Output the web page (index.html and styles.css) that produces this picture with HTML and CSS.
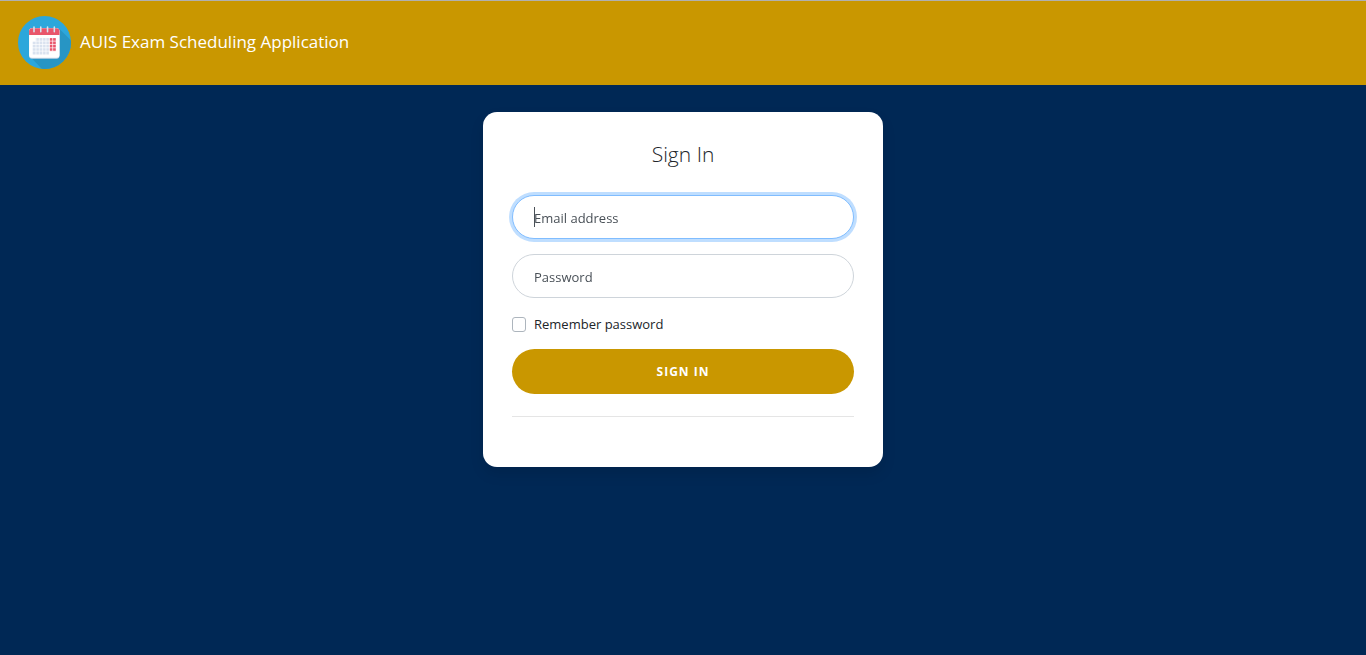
FILE: index.html
```html
<!DOCTYPE html>
<html lang="en">
<head>
<meta charset="utf-8">
<meta name="viewport" content="width=device-width, initial-scale=1">
<title>AUIS Exam Scheduling Application</title>
<link rel="stylesheet" href="styles.css">
</head>
<body>
<header class="navbar">
  <a class="brand" href="#">
    <svg class="brand-logo" viewBox="0 0 54 54" aria-hidden="true">
      <defs><clipPath id="disc"><circle cx="27" cy="27" r="27"/></clipPath></defs>
      <circle cx="27" cy="27" r="27" fill="#2ca7db"/>
      <path d="M42 13 L62 33 V62 H32 L13 42 Z" fill="#2795c4" clip-path="url(#disc)"/>
      <rect x="11.300" y="12.500" width="31" height="31" rx="3" fill="#c9d5e3"/>
      <rect x="11.300" y="12.500" width="31" height="30" rx="3" fill="#fff"/>
      <path d="M11.300 19.300 V15.500 a3 3 0 0 1 3-3 H39.300 a3 3 0 0 1 3 3 V19.300 Z" fill="#e9566b"/>
      <path d="M16.300 11.300 V16 M23.200 11.300 V16 M30.100 11.300 V16 M37 11.300 V16" stroke="#d5e3ee" stroke-width="1.600" stroke-linecap="round"/>
      <path d="M18 22.500h13.700v16.700H15V26h3z" fill="#d9e2ef"/>
      <path d="M32.200 22.500h6.300v13.300h-6.300z" fill="#e9566b"/>
      <path d="M18.300 22v18M21.700 22v18M25.100 22v18M28.500 22v18M31.900 22v18M35.300 22v14M14 25.600h25M14 29h25M14 32.400h25M14 35.800h25" stroke="#fff" stroke-width=".7"/>
    </svg>
    <span class="brand-name">AUIS Exam Scheduling Application</span>
  </a>
</header>
<main class="page">
  <section class="card">
    <h1 class="card-title">Sign In</h1>
    <form class="form-signin">
      <div class="field">
        <input class="field-input" type="email" id="email" autofocus required>
        <label class="field-label" for="email">Email address</label>
      </div>
      <div class="field">
        <input class="field-input" type="password" id="password" required>
        <label class="field-label" for="password">Password</label>
      </div>
      <div class="check">
        <input class="check-input" type="checkbox" id="remember">
        <label for="remember">Remember password</label>
      </div>
      <button class="btn" type="submit">Sign in</button>
      <hr class="divider">
    </form>
  </section>
</main>
</body>
</html>
```
FILE: styles.css
```css
*, *::before, *::after { box-sizing: border-box; }

body {
  margin: 0;
  min-height: 100vh;
  background: #002855;
  color: #212529;
  font-family: "Segoe UI", "Open Sans", "Noto Sans", sans-serif;
  font-size: 13px;
  line-height: 22px;
}

.navbar {
  display: flex;
  align-items: center;
  padding: 15px 18px 16px;
  border-top: 1px solid #b0b0b0;
  background: #c99700;
}

.brand {
  display: flex;
  align-items: center;
  gap: 9px;
  color: #fff;
  font-size: 17px;
  text-decoration: none;
}

.brand-logo {
  flex: none;
  width: 53px;
  height: 53px;
}

.brand-name {
  padding-bottom: 2px;
}

.page {
  display: flex;
  justify-content: center;
  padding: 27px 16px;
}

.card {
  width: 100%;
  max-width: 400px;
  padding: 29px 29px 28px;
  border-radius: 14px;
  background: #fff;
  box-shadow: 0 7px 14px rgba(0, 0, 0, .1);
}

.card-title {
  margin: 0 0 28px;
  font-size: 21px;
  font-weight: 300;
  line-height: 26px;
  text-align: center;
}

.field {
  position: relative;
  margin-bottom: 15px;
}

.field-input {
  display: block;
  width: 100%;
  height: 44px;
  padding: 10px 21px;
  border: 1px solid #ced4da;
  border-radius: 22px;
  outline: none;
  background: #fff;
  color: #495057;
  caret-color: transparent;
  font: inherit;
}

.field-input:focus {
  border-color: #80bdff;
  box-shadow: 0 0 0 3px rgba(0, 123, 255, .25);
}

.field-label {
  position: absolute;
  inset: 0;
  padding: 12px 22px;
  color: #495057;
  pointer-events: none;
}

/* text cursor of the focused field */
.field-input:focus + .field-label::before {
  content: "";
  position: absolute;
  top: 12px;
  left: 22px;
  width: 1px;
  height: 20px;
  background: #495057;
}

.check {
  display: flex;
  align-items: center;
  gap: 8px;
  margin-bottom: 14px;
}

.check-input {
  appearance: none;
  width: 14px;
  height: 15px;
  margin: 0;
  border: 1px solid #adb5bd;
  border-radius: 3px;
  background: #fff;
}

.check-input:checked {
  border-color: #007bff;
  background: #007bff;
}

.btn {
  display: block;
  width: 100%;
  padding: 14px;
  border: 0;
  border-radius: 23px;
  background: #c99700;
  color: #fff;
  font: inherit;
  font-size: 12px;
  font-weight: 700;
  line-height: 17px;
  letter-spacing: 1px;
  text-transform: uppercase;
  cursor: pointer;
}

.divider {
  margin: 22px 0;
  border: 0;
  border-top: 1px solid rgba(0, 0, 0, .1);
}
```
